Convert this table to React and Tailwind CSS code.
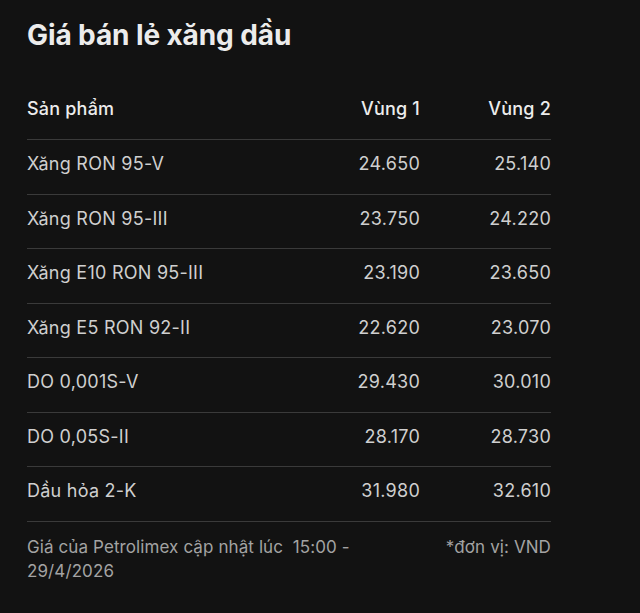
import React from 'react';

const rows = [
  ['Xăng RON 95-V', '24.650', '25.140'],
  ['Xăng RON 95-III', '23.750', '24.220'],
  ['Xăng E10 RON 95-III', '23.190', '23.650'],
  ['Xăng E5 RON 92-II', '22.620', '23.070'],
  ['DO 0,001S-V', '29.430', '30.010'],
  ['DO 0,05S-II', '28.170', '28.730'],
  ['Dầu hỏa 2-K', '31.980', '32.610'],
];

export default function App() {
  return (
    <div className="min-h-[613px] w-[640px] bg-[#121212] font-['Inter',sans-serif]">
      <div className="w-[524px] ml-[27px] pt-[17px]">
        <h1 className="text-[28px] leading-9 font-bold text-[#ececec] tracking-[-0.1px]">Giá bán lẻ xăng dầu</h1>

        <div className="mt-[33px]">
          <div className="grid grid-cols-[1fr_120px_131px] h-[54px] pb-[8px] items-center text-[18px] tracking-[0.2px] font-medium text-[#ececec] border-b border-[#3a3a3a]">
            <span>Sản phẩm</span>
            <span className="text-right">Vùng 1</span>
            <span className="text-right">Vùng 2</span>
          </div>
          {rows.map(([name, v1, v2]) => (
            <div key={name} className="grid grid-cols-[1fr_120px_131px] h-[54.5px] pb-[6px] items-center text-[18px] tracking-[0.25px] text-[#cfcfcf] border-b border-[#3a3a3a]">
              <span>{name}</span>
              <span className="text-right">{v1}</span>
              <span className="text-right">{v2}</span>
            </div>
          ))}
        </div>

        <div className="flex justify-between pt-[13px] text-[17px] tracking-[0.1px] leading-6 text-[#a3a3a3]">
          <p className="w-[340px]">Giá của Petrolimex cập nhật lúc&nbsp; 15:00 - 29/4/2026</p>
          <p>*đơn vị: VND</p>
        </div>
      </div>
    </div>
  );
}
